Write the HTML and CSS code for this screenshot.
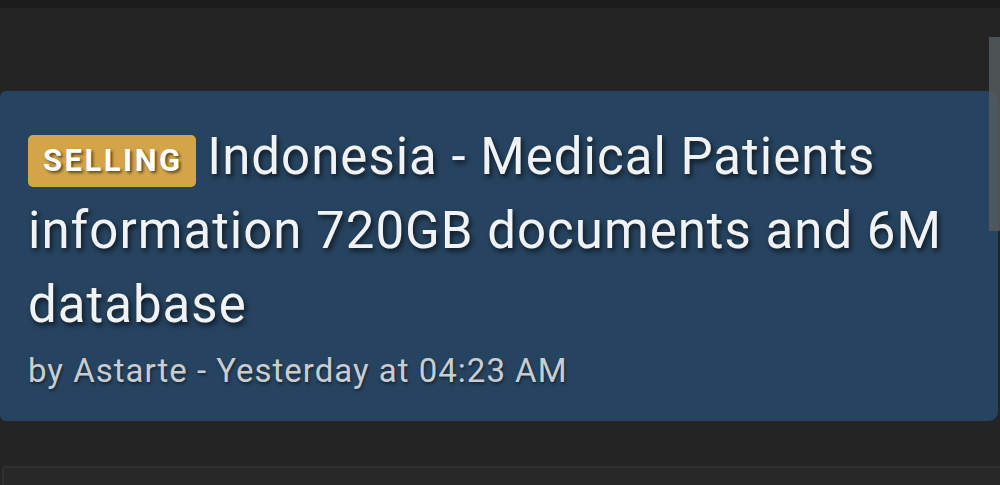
FILE: index.html
```html
<!DOCTYPE html>
<html lang="en">
<head>
  <meta charset="UTF-8" />
  <title>Thread</title>
  <link rel="stylesheet" href="styles.css">
</head>
<body>
  <div class="topbar"></div>
  <div class="scrollbar"></div>

  <main class="list">
    <div class="thread">
      <h2 class="title"><span class="label">SELLING</span> Indonesia - Medical Patients information 720GB documents and 6M database</h2>
      <div class="meta">by Astarte - Yesterday at 04:23 AM</div>
    </div>
    <div class="next"></div>
  </main>
</body>
</html>
```

FILE: styles.css
```css
body {
  margin: 0;
  background: #242424;
  font-family: Roboto, "Noto Sans", sans-serif;
  height: 485px;
  overflow: hidden;
  position: relative;
}

.topbar {
  height: 8px;
  background: #1b1b1b;
}

.scrollbar {
  position: absolute;
  right: 0;
  top: 37px;
  width: 11px;
  height: 194px;
  background: #555a5e;
  opacity: 0.85;
}

.list {
  padding-top: 83px;
}

.thread {
  background: #26435f;
  margin-right: 2px;
  border-radius: 6px 9px 9px 6px;
  padding: 29px 28px 0 28px;
  height: 301px;
}

.title {
  margin: 0;
  font-size: 51px;
  font-weight: 400;
  letter-spacing: 1px;
  line-height: 74px;
  color: #f0f2f4;
  text-shadow: 2px 3px 5px rgba(0, 0, 0, 0.65);
}

.label {
  display: inline-block;
  background: #d4a548;
  color: #fff;
  font-size: 31px;
  font-weight: 700;
  letter-spacing: 2.5px;
  line-height: 52px;
  padding: 0 13px 0 15px;
  margin-right: -2px;
  border-radius: 5px;
  vertical-align: 3px;
  text-shadow: 2px 2px 3px rgba(0, 0, 0, 0.55);
}

.meta {
  margin-top: 9px;
  font-size: 33px;
  letter-spacing: 1px;
  color: #c9cdd2;
  text-shadow: 1px 2px 3px rgba(0, 0, 0, 0.45);
}

.next {
  margin: 45px 0 0 2px;
  height: 30px;
  background: #282828;
  border-top: 2px solid #303030;
  border-left: 2px solid #303030;
  border-radius: 4px 0 0 0;
}
```
